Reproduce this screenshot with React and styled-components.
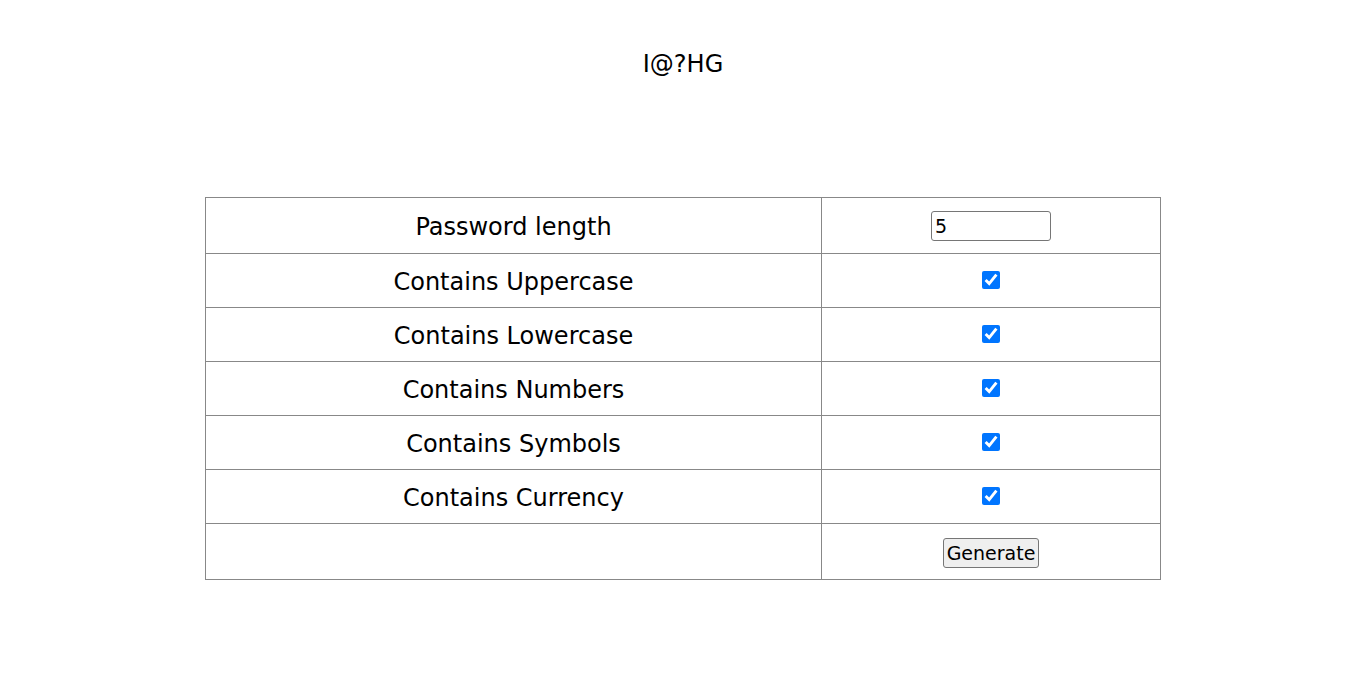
import React, { useState } from 'react';
import styled, { createGlobalStyle } from 'styled-components';

const GlobalStyle = createGlobalStyle`
  body {
    margin: 0;
    background: #fff;
    font-family: "DejaVu Sans", Verdana, sans-serif;
    color: #000;
  }
`;

const Page = styled.div`
  display: flex;
  flex-direction: column;
  align-items: center;
  padding-top: 49px;
`;

const Result = styled.div`
  font-size: 24px;
  line-height: 30px;
  height: 30px;
  margin-bottom: 118px;
`;

const Table = styled.table`
  width: 956px;
  border-collapse: collapse;
  font-size: 24px;
`;

const Row = styled.tr`
  height: ${(p) => (p.$tall ? 56 : 54)}px;
`;

const Cell = styled.td`
  border: 1px solid #888;
  text-align: center;
  vertical-align: middle;
  padding: 2px 0 0;
  width: ${(p) => p.$w || 'auto'};
`;

const LengthInput = styled.input`
  width: 120px;
  height: 30px;
  box-sizing: border-box;
  font-family: "DejaVu Sans", Verdana, sans-serif;
  font-size: 19px;
  padding: 0 3px;
  border: 1px solid #767676;
  border-radius: 3px;
  display: block;
  margin: 0 auto;
  position: relative;
  top: -1px;
`;

const Check = styled.input`
  width: 18px;
  height: 18px;
  margin: 0 auto;
  display: block;
  accent-color: #0075ff;
  position: relative;
  top: -2px;
`;

const Button = styled.button`
  font-family: "DejaVu Sans", Verdana, sans-serif;
  font-size: 19px;
  height: 30px;
  padding: 0 3px;
  background: #efefef;
  border: 1px solid #767676;
  border-radius: 3px;
  color: #000;
`;

const options = [
  'Contains Uppercase',
  'Contains Lowercase',
  'Contains Numbers',
  'Contains Symbols',
  'Contains Currency',
];

export default function App() {
  const [length, setLength] = useState('5');
  const [checked, setChecked] = useState(options.map(() => true));

  return (
    <>
      <GlobalStyle />
      <Page>
        <Result>I@?HG</Result>
        <Table>
          <tbody>
            <Row $tall>
              <Cell $w="615px">Password length</Cell>
              <Cell>
                <LengthInput value={length} onChange={(e) => setLength(e.target.value)} />
              </Cell>
            </Row>
            {options.map((label, i) => (
              <Row key={label}>
                <Cell>{label}</Cell>
                <Cell>
                  <Check
                    type="checkbox"
                    checked={checked[i]}
                    onChange={() => setChecked(checked.map((c, j) => (j === i ? !c : c)))}
                  />
                </Cell>
              </Row>
            ))}
            <Row $tall>
              <Cell />
              <Cell>
                <Button>Generate</Button>
              </Cell>
            </Row>
          </tbody>
        </Table>
      </Page>
    </>
  );
}
